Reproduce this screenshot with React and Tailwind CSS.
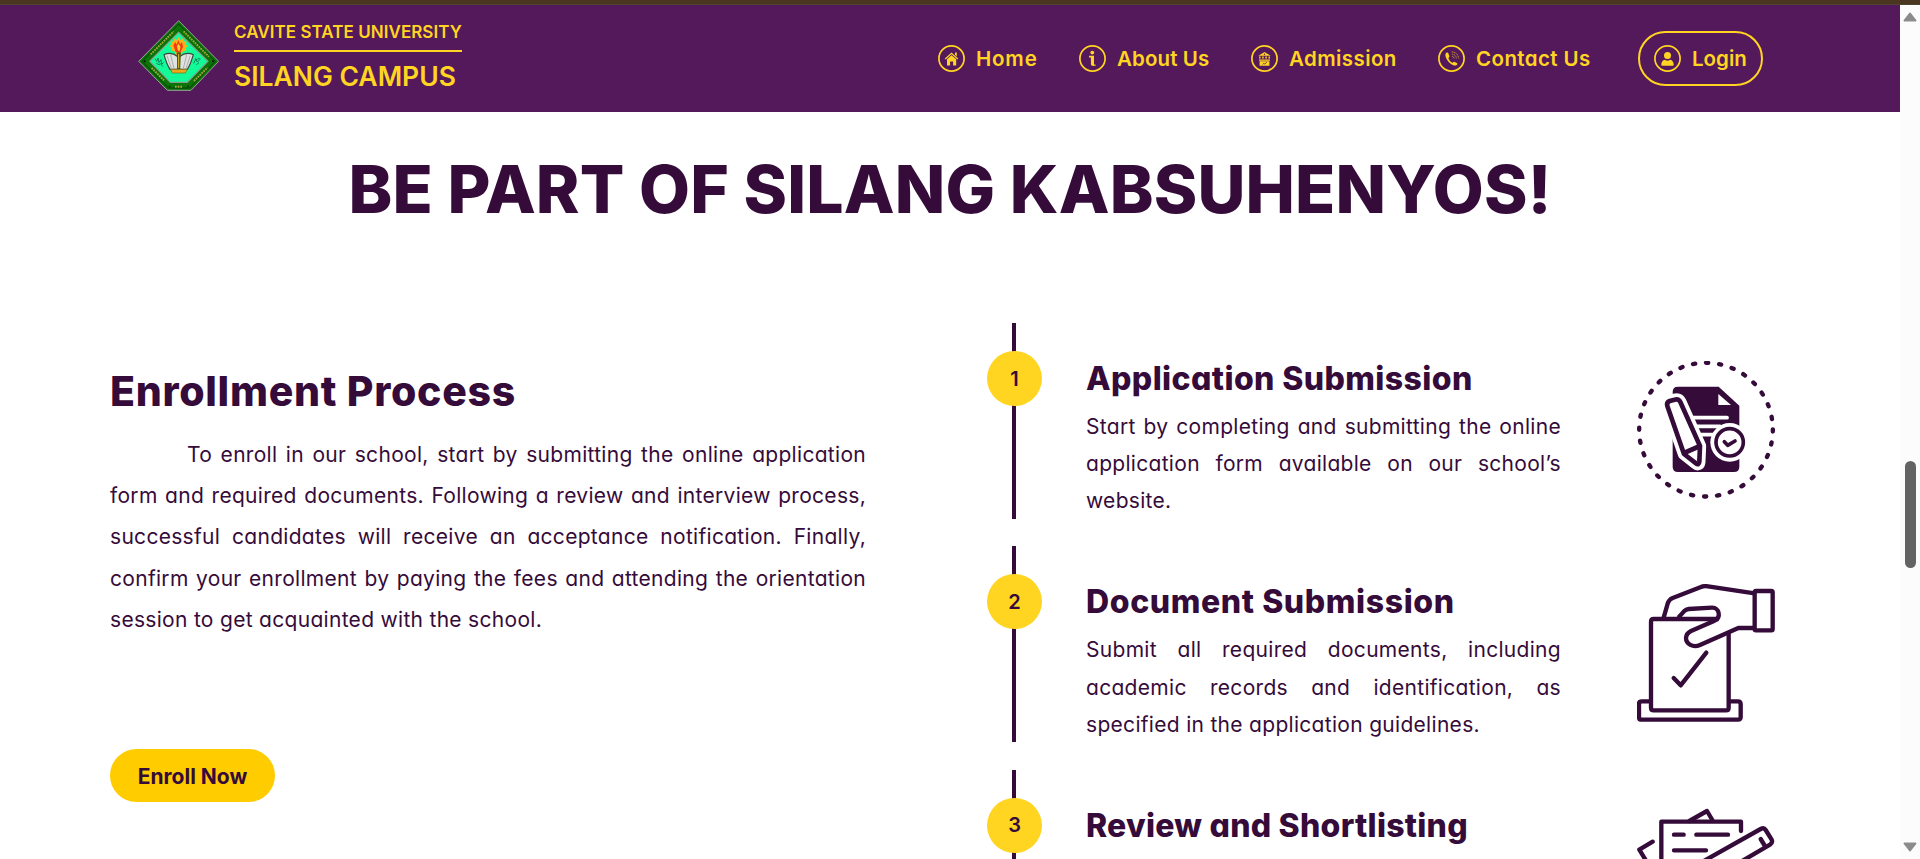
const HOME = (
  <>
    <path d="M7.2 14 13.5 8.3 19.8 14" fill="none" stroke="currentColor" strokeWidth="1.3" />
    <path d="M17 7.6h1.8v3.8L17 9.8z" fill="currentColor" />
    <path d="M9 14.2 13.5 10.2 18.2 14.2V20.6h-3.1v-4h-3v4H9z" fill="currentColor" />
  </>
);

const INFO = (
  <>
    <circle cx="13.3" cy="7.6" r="1.9" fill="currentColor" />
    <path d="M10 10.8h5v8.2c0 .6.6.9 1.9.7v.8c-1.8.7-5 .9-5-1.4V12.4H10z" fill="currentColor" />
  </>
);

const ADMISSION = (
  <>
    <path d="M7.3 10.7 13.5 6.9l6.2 3.8z" fill="currentColor" />
    <circle cx="13.5" cy="9.3" r=".7" fill="#54195a" />
    <path d="M8.8 11.6v2M11.9 11.6v2M15.1 11.6v2M18.2 11.6v2" stroke="currentColor" strokeWidth="1.5" />
    <path d="M8 14.6h11v1.2H8zM8.600 16.300h9.800v4.400H8.600z" fill="currentColor" />
    <path d="m11.5 19.4 1.3-1 1 .6 2-1.8" fill="none" stroke="#54195a" strokeWidth=".8" />
  </>
);

const PHONE = (
  <>
    <path d="M8.7 7.6c-1.5.8-1.7 2.6-.8 5 1.4 3.6 4.2 6.6 7.4 7.7 2 .6 3.4.2 4-1 .2-.6 0-1-.5-1.3l-2.1-1.1c-.6-.3-1.1-.1-1.5.4-.4.5-.8.5-1.3.2-1.6-1-2.9-2.5-3.4-4-.2-.5 0-.8.3-1.1.6-.4.7-.9.5-1.5l-1-2.6c-.3-.8-.9-1-1.6-.7z" fill="currentColor" />
    <path d="M14 11.2c1.3.2 2 .9 2.2 2.2M13.9 9c2.6.2 4.3 1.9 4.5 4.4M13.8 6.8c3.8.2 6.6 2.9 6.8 6.6" fill="none" stroke="currentColor" strokeWidth=".6" strokeDasharray="1.4 .5" />
  </>
);

const USER = (
  <>
    <circle cx="13.5" cy="10.6" r="3.5" fill="currentColor" />
    <path d="M7.3 20.1c0-3.1 1.3-4.9 3.5-5.3 1.7 1.2 3.7 1.2 5.4 0 2.2.4 3.5 2.2 3.5 5.3 0 .5-.3.7-.7.7H8c-.4 0-.7-.2-.7-.7z" fill="currentColor" />
  </>
);

function NavItem({ icon, label, className = "", text = "" }) {
  return (
    <a className={`flex items-center ${className}`}>
      <svg viewBox="0 0 27 27" className="h-[27px] w-[27px] shrink-0">
        <circle cx="13.5" cy="13.5" r="12.6" fill="none" stroke="currentColor" strokeWidth="1.7" />
        {icon}
      </svg>
      <span className={`ml-[11px] pt-[2px] text-[20.5px] font-semibold whitespace-nowrap ${text}`}>{label}</span>
    </a>
  );
}

function Seal() {
  return (
    <svg viewBox="55 60 246 213" className="h-[71px] w-[82px] shrink-0">
      <path d="M177 62 297 184 214 271H143L57 184Z" fill="#0a7407" stroke="#9a9f9a" strokeWidth="3" />
      <path d="M177 72 287 184 210 264H147L67 184Z" fill="none" stroke="#083c08" strokeWidth="3" />
      <path d="M93 163 162 94M192 94 268 170M96 204 133 241M223 243 264 203M166 260H190" stroke="#a3a53a" strokeWidth="6" strokeDasharray="5 3" fill="none" />
      <path d="M177 97 265 184 203 247H152L90 184Z" fill="#12fb98" stroke="#8a9a90" strokeWidth="3.5" />
      <path d="m106 176 5 8 4-10 3 14 6-9 2 14 6-6M110 190l8 4 4-3 8 9M222 190l6-12 5 8 8-8M226 176l6 3 4-4 6 2M230 194l8-6" fill="none" stroke="#147f5c" strokeWidth="3" />
      <path d="m177 111 5 10 8-6 1 10 10-1-4 9 8 5-8 6 3 9-10-1-5 14h-16l-5-14-10 1 3-9-8-6 8-5-4-9 10 1 1-10 8 6z" fill="#ffb018" />
      <path d="m168 156-7-20 6-10 4 8 5-14 5 13 6-7 3 14-7 16z" fill="#f43c12" />
      <path d="m175 152-3-14 5-7 5 9-2 12z" fill="#ffd63a" />
      <path d="M133 164c14-7 29-4 42 6l-1 38h-23c-9-13-14-30-18-44ZM221 164c-14-7-29-4-42 6l1 38h23c9-13 14-30 18-44Z" fill="#dfe2df" stroke="#38443c" strokeWidth="3.5" />
      <path d="m142 167 13 38M153 165l10 40M212 167l-13 38M201 165l-10 40" stroke="#a9afab" strokeWidth="3" />
      <path d="M171 157h13l-3 50h-7z" fill="#4d5a12" />
      <path d="M177 162v42" stroke="#d8bd2d" strokeWidth="3" />
      <path d="M152 208h51l-6 11h-39z" fill="#f2a71a" stroke="#6d6a1b" strokeWidth="2" />
      <circle cx="75" cy="184" r="3" fill="#111" />
      <circle cx="280" cy="184" r="3" fill="#111" />
      <circle cx="150" cy="259" r="2.5" fill="#111" />
      <circle cx="205" cy="259" r="2.5" fill="#111" />
    </svg>
  );
}

function ApplicationIcon() {
  return (
    <svg viewBox="51 48 414 414" className="h-[138px] w-[138px]">
      <circle cx="258" cy="254" r="200.5" fill="none" stroke="#350b3a" strokeWidth="13" strokeLinecap="round" pathLength="320" strokeDasharray="1.7 8.3" transform="rotate(-.3 258 254)" />
      <path d="M174 125H296L358 182V365Q358 381 342 381H174Q158 381 158 365V141Q158 125 174 125Z" fill="#350b3a" />
      <path d="M295 147v33h38z" fill="#fff" />
      <path d="M205 218H321M205 244H300M205 269H300" stroke="#fff" strokeWidth="11.5" strokeLinecap="round" />
      <path d="M142 183Q139 172 149 168L164 164Q176 161 181 171L240 303 238 350Q237 362 228 355L192 327Z" fill="#fff" stroke="#fff" strokeWidth="37" strokeLinejoin="round" />
      <path d="M142 183Q139 172 149 168L164 164Q176 161 181 171L240 303 238 350Q237 362 228 355L192 327Z" fill="#fff" stroke="#350b3a" strokeWidth="14" strokeLinejoin="round" />
      <path d="M192 324 240 303" stroke="#350b3a" strokeWidth="14" />
      <circle cx="329" cy="292" r="58" fill="#fff" />
      <circle cx="329" cy="292" r="41" fill="none" stroke="#350b3a" strokeWidth="11" />
      <path d="M313 290 323 301 345 288" fill="none" stroke="#350b3a" strokeWidth="11" strokeLinecap="round" strokeLinejoin="round" />
    </svg>
  );
}

function DocumentIcon() {
  return (
    <svg viewBox="51 42 414 414" className="h-[138px] w-[138px]" fill="none" stroke="#350b3a" strokeWidth="13" strokeLinejoin="round">
      <path d="M131 143 143 101Q147 88 158 84L243 51Q252 47 264 49L404 70" />
      <rect x="404" y="63" width="54" height="118" rx="4" />
      <path d="M404 174H355L240 225C219 234 198 222 198 204Q199 190 213 183L282 153C306 142 297 112 276 113L206 117Q198 118 192 124L175 143" />
      <path d="M296 147H101Q93 147 93 155V413Q93 421 101 421H318Q326 421 326 413V188" />
      <path d="M93 394H65Q57 394 57 402V441Q57 449 65 449H354Q362 449 362 441V402Q362 394 354 394H326" />
      <path d="M161 324 182 346 259 248" strokeLinecap="round" />
    </svg>
  );
}

function ReviewIcon() {
  return (
    <svg viewBox="51 57 414 414" className="h-[138px] w-[138px]" fill="none" stroke="#350b3a" strokeWidth="13" strokeLinejoin="round" strokeLinecap="round">
      <path d="M124 400V98H363V126" />
      <path d="M208 96 261 66 277 93" />
      <path d="M98 158 58 182 160 350" />
      <path d="M162 137H191M229 137H324M162 184H258" />
      <path d="M200 245 422 120Q432 115 437 123L455 152Q459 161 450 167L240 290" />
      <path d="M422 150 433 168" />
    </svg>
  );
}

function Step({ number, title, titleClass = "", lines, last, icon }) {
  return (
    <li className="flex h-[196px]">
      <div className="relative flex w-[55px] shrink-0 flex-col pl-[25px]">
        <div className="h-full w-[4px] bg-[#350b3a]" />
        <div className="absolute top-[28px] left-0 flex h-[55px] w-[55px] items-center justify-center rounded-full bg-[#ffd522] text-[20px] font-semibold">{number}</div>
      </div>
      <div className="ml-[44px] w-[475px] pt-[32px]">
        <h3 className={`h-[48px] text-[32px] leading-[48px] font-extrabold whitespace-nowrap ${titleClass}`}>{title}</h3>
        <div className="mt-[5px] text-[21px] leading-[37.2px] tracking-[0.3px] whitespace-nowrap">
          {lines.map((line) => (
            <p key={line} className="[text-align-last:justify]">{line}</p>
          ))}
          <p>{last}</p>
        </div>
      </div>
      <div className="ml-[76px] pt-[38px]">{icon}</div>
    </li>
  );
}

export default function App() {
  return (
    <div className="flex h-[859px] w-full flex-col overflow-hidden bg-white font-[Inter,sans-serif] text-[#350b3a] [font-feature-settings:'cv11']">
      <div className="h-[5px] shrink-0 border-b border-[#4f4331] bg-[#4b3621]" />
      <div className="flex min-h-0 flex-1">
        <div className="flex min-w-0 flex-1 flex-col overflow-hidden">
          <header className="flex h-[107px] shrink-0 items-start bg-[#54195a] pl-[138px] text-[#ffd522]">
            <div className="flex pt-[15px]">
              <Seal />
              <div className="ml-[14px] w-[228px]">
                <div className="h-[32px] border-b-2 border-[#ffd522] text-[17px] leading-[24px] font-semibold tracking-[0.05px] whitespace-nowrap">CAVITE STATE UNIVERSITY</div>
                <div className="pt-[5px] text-[26.5px] leading-[39px] font-semibold whitespace-nowrap">SILANG CAMPUS</div>
              </div>
            </div>
            <nav className="ml-[476px] flex h-[107px] items-center">
              <NavItem icon={HOME} label="Home" className="w-[141px]" text="tracking-[0.8px]" />
              <NavItem icon={INFO} label="About Us" className="w-[172px]" text="tracking-[0.1px]" />
              <NavItem icon={ADMISSION} label="Admission" className="w-[187px]" text="tracking-[0.4px]" />
              <NavItem icon={PHONE} label="Contact Us" className="w-[200px]" text="tracking-[0.4px]" />
              <NavItem icon={USER} label="Login" className="h-[55px] w-[125px] rounded-full border-2 border-[#ffd522] pl-[14px]" />
            </nav>
          </header>
          <h1 className="mt-[37px] h-[80px] shrink-0 text-center text-[66px] leading-[80px] font-extrabold tracking-[0.15px] whitespace-nowrap">BE PART OF SILANG KABSUHENYOS!</h1>
          <main className="mt-[94px] flex pl-[110px]">
            <section className="w-[756px] pt-[39px]">
              <h2 className="text-[41px] leading-[58px] font-extrabold tracking-[0.7px] whitespace-nowrap">Enrollment Process</h2>
              <div className="mt-[14px] text-[21px] leading-[41.2px] tracking-[0.3px] whitespace-nowrap">
                <p className="pl-[77px] [text-align-last:justify]">To enroll in our school, start by submitting the online application</p>
                <p className="[text-align-last:justify]">form and required documents. Following a review and interview process,</p>
                <p className="[text-align-last:justify]">successful candidates will receive an acceptance notification. Finally,</p>
                <p className="[text-align-last:justify]">confirm your enrollment by paying the fees and attending the orientation</p>
                <p>session to get acquainted with the school.</p>
              </div>
              <button className="mt-[109px] flex h-[53px] w-[165px] items-center justify-center rounded-full bg-[#ffcc00] pt-[2px] text-[21px] font-bold">Enroll Now</button>
            </section>
            <ol className="ml-[121px] flex flex-col gap-[27.4px]">
              <Step number="1" title="Application Submission" titleClass="tracking-[0.4px]" lines={["Start by completing and submitting the online", "application form available on our school’s"]} last="website." icon={<ApplicationIcon />} />
              <Step number="2" title="Document Submission" titleClass="tracking-[0.6px]" lines={["Submit all required documents, including", "academic records and identification, as"]} last="specified in the application guidelines." icon={<DocumentIcon />} />
              <Step number="3" title="Review and Shortlisting" titleClass="tracking-[0.25px]" lines={[]} icon={<ReviewIcon />} />
            </ol>
          </main>
        </div>
        <div className="flex w-5 shrink-0 flex-col items-center bg-[#fcfcfc]">
          <svg viewBox="0 0 14 10" className="mt-[7px] h-[10px] w-[14px]"><path d="M7 1.5 12.5 8.5H1.5z" fill="#8b8b8b" stroke="#8b8b8b" strokeWidth="2" strokeLinejoin="round" /></svg>
          <div className="mt-[439px] h-[107px] w-[11px] rounded-full bg-[#636363]" />
          <svg viewBox="0 0 14 10" className="mt-[274px] h-[10px] w-[14px]"><path d="M7 8.5 12.5 1.5H1.5z" fill="#8b8b8b" stroke="#8b8b8b" strokeWidth="2" strokeLinejoin="round" /></svg>
        </div>
      </div>
    </div>
  );
}
